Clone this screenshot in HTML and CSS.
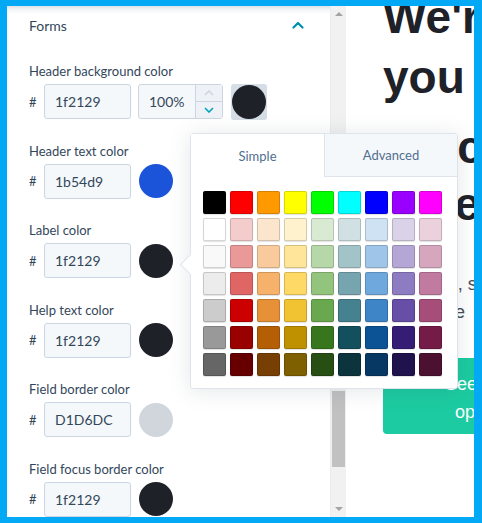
FILE: index.html
```html
<!DOCTYPE html>
<html lang="en">
	<head>
		<meta charset="UTF-8" />
		<meta name="viewport" content="width=device-width, initial-scale=1.0" />
		<title>Form styles</title>
		<link rel="stylesheet" href="styles.css">
	</head>
	<body>
		<div class="frame">
			<div class="panel">
				<div class="panel-head">
					<span>Forms</span>
					<svg class="collapse" width="12" height="8" viewBox="0 0 12 8">
						<polyline points="1.5,6.5 6,2 10.5,6.5" fill="none" stroke="#0091ae" stroke-width="2.2" stroke-linecap="round" stroke-linejoin="round" />
					</svg>
				</div>

				<div class="fields">
					<div class="field">
						<div class="label">Header background color</div>
						<div class="row">
							<span class="hash">#</span>
							<div class="hex">1f2129</div>
							<div class="pct">
								<span class="pct-val">100%</span>
								<div class="stepper">
									<span class="step">
										<svg width="10" height="6" viewBox="0 0 10 6"><polyline points="1,5 5,1 9,5" fill="none" stroke="#cbd6e2" stroke-width="1.6" /></svg>
									</span>
									<span class="step">
										<svg width="10" height="6" viewBox="0 0 10 6"><polyline points="1,1 5,5 9,1" fill="none" stroke="#00a4bd" stroke-width="1.6" /></svg>
									</span>
								</div>
							</div>
							<div class="swatch checker"><span class="dot dot-dark"></span></div>
						</div>
					</div>

					<div class="field">
						<div class="label">Header text color</div>
						<div class="row">
							<span class="hash">#</span>
							<div class="hex">1b54d9</div>
							<div class="swatch"><span class="dot dot-blue"></span></div>
						</div>
					</div>

					<div class="field">
						<div class="label">Label color</div>
						<div class="row">
							<span class="hash">#</span>
							<div class="hex">1f2129</div>
							<div class="swatch"><span class="dot dot-dark"></span></div>
						</div>
					</div>

					<div class="field">
						<div class="label">Help text color</div>
						<div class="row">
							<span class="hash">#</span>
							<div class="hex">1f2129</div>
							<div class="swatch"><span class="dot dot-dark"></span></div>
						</div>
					</div>

					<div class="field">
						<div class="label">Field border color</div>
						<div class="row">
							<span class="hash">#</span>
							<div class="hex">D1D6DC</div>
							<div class="swatch"><span class="dot dot-grey"></span></div>
						</div>
					</div>

					<div class="field">
						<div class="label">Field focus border color</div>
						<div class="row">
							<span class="hash">#</span>
							<div class="hex">1f2129</div>
							<div class="swatch"><span class="dot dot-dark"></span></div>
						</div>
					</div>
				</div>
			</div>

			<div class="scrollbar">
				<span class="sb-btn"><i class="arrow-up"></i></span>
				<div class="sb-track"><div class="sb-thumb"></div></div>
				<span class="sb-btn"><i class="arrow-down"></i></span>
			</div>

			<div class="preview">
				<div class="hero">
					<div>We're</div>
					<div>you</div>
				</div>
				<div class="hero hero-sub">
					<div>we co</div>
					<div>here</div>
				</div>
				<div class="intro">
					<div>Welcome, say hi</div>
					<div>Our whole</div>
				</div>
				<div class="cta">
					<div>See more</div>
					<div>options</div>
				</div>
			</div>

			<div class="picker">
				<div class="tabs">
					<div class="tab">Simple</div>
					<div class="tab tab-off">Advanced</div>
				</div>
				<div class="palette">
					<span class="chip" style="background:#000000"></span>
					<span class="chip" style="background:#ff0000"></span>
					<span class="chip" style="background:#ff9900"></span>
					<span class="chip" style="background:#ffff00"></span>
					<span class="chip" style="background:#00ff00"></span>
					<span class="chip" style="background:#00ffff"></span>
					<span class="chip" style="background:#0000ff"></span>
					<span class="chip" style="background:#9900ff"></span>
					<span class="chip" style="background:#ff00ff"></span>

					<span class="chip" style="background:#ffffff"></span>
					<span class="chip" style="background:#f4cccc"></span>
					<span class="chip" style="background:#fce5cd"></span>
					<span class="chip" style="background:#fff2cc"></span>
					<span class="chip" style="background:#d9ead3"></span>
					<span class="chip" style="background:#d0e0e3"></span>
					<span class="chip" style="background:#cfe2f3"></span>
					<span class="chip" style="background:#d9d2e9"></span>
					<span class="chip" style="background:#ead1dc"></span>

					<span class="chip" style="background:#f9f9f9"></span>
					<span class="chip" style="background:#ea9999"></span>
					<span class="chip" style="background:#f9cb9c"></span>
					<span class="chip" style="background:#ffe599"></span>
					<span class="chip" style="background:#b6d7a8"></span>
					<span class="chip" style="background:#a2c4c9"></span>
					<span class="chip" style="background:#9fc5e8"></span>
					<span class="chip" style="background:#b4a7d6"></span>
					<span class="chip" style="background:#d5a6bd"></span>

					<span class="chip" style="background:#ececec"></span>
					<span class="chip" style="background:#e06666"></span>
					<span class="chip" style="background:#f6b26b"></span>
					<span class="chip" style="background:#ffd966"></span>
					<span class="chip" style="background:#93c47d"></span>
					<span class="chip" style="background:#76a5af"></span>
					<span class="chip" style="background:#6fa8dc"></span>
					<span class="chip" style="background:#8e7cc3"></span>
					<span class="chip" style="background:#c27ba0"></span>

					<span class="chip" style="background:#cccccc"></span>
					<span class="chip" style="background:#cc0000"></span>
					<span class="chip" style="background:#e69138"></span>
					<span class="chip" style="background:#f1c232"></span>
					<span class="chip" style="background:#6aa84f"></span>
					<span class="chip" style="background:#45818e"></span>
					<span class="chip" style="background:#3d85c6"></span>
					<span class="chip" style="background:#674ea7"></span>
					<span class="chip" style="background:#a64d79"></span>

					<span class="chip" style="background:#999999"></span>
					<span class="chip" style="background:#990000"></span>
					<span class="chip" style="background:#b45f06"></span>
					<span class="chip" style="background:#bf9000"></span>
					<span class="chip" style="background:#38761d"></span>
					<span class="chip" style="background:#134f5c"></span>
					<span class="chip" style="background:#0b5394"></span>
					<span class="chip" style="background:#351c75"></span>
					<span class="chip" style="background:#741b47"></span>

					<span class="chip" style="background:#666666"></span>
					<span class="chip" style="background:#660000"></span>
					<span class="chip" style="background:#783f04"></span>
					<span class="chip" style="background:#7f6000"></span>
					<span class="chip" style="background:#274e13"></span>
					<span class="chip" style="background:#0c343d"></span>
					<span class="chip" style="background:#073763"></span>
					<span class="chip" style="background:#20124d"></span>
					<span class="chip" style="background:#4c1130"></span>
				</div>
			</div>
		</div>
	</body>
</html>
```

FILE: styles.css
```css
* {
	margin: 0;
	padding: 0;
	box-sizing: border-box;
}

body {
	background: #03a9f4;
	font-family: 'Lato', 'Liberation Sans', sans-serif;
	color: #33475b;
}

.frame {
	position: relative;
	display: flex;
	height: 511px;
	margin: 6px 8px 6px 7px;
	background: #fff;
	overflow: hidden;
}

/* left settings panel */
.panel {
	width: 323px;
	flex: none;
	padding: 0 26px 0 22px;
	background: linear-gradient(
		to bottom,
		#dde2e8 0,
		#f4f6f8 4px,
		#fff 8px
	);
}

.panel-head {
	display: flex;
	align-items: center;
	justify-content: space-between;
	height: 38px;
	font-size: 14px;
}

.fields {
	padding-top: 18px;
}

.field {
	margin-bottom: 22.5px;
}

.label {
	font-size: 13px;
	line-height: 18px;
	margin-bottom: 4px;
}

.row {
	display: flex;
	align-items: center;
	height: 35px;
}

.hash {
	width: 15px;
	font-size: 13px;
}

.hex {
	width: 87px;
	height: 35px;
	margin-right: 7px;
	padding-left: 10px;
	border: 1px solid #cbd6e2;
	border-radius: 3px;
	background: #f5f8fa;
	font-size: 14px;
	line-height: 33px;
}

.pct {
	display: flex;
	width: 85px;
	height: 35px;
	margin-right: 8px;
	border: 1px solid #cbd6e2;
	border-radius: 3px;
	background: #f5f8fa;
}

.pct-val {
	flex: 1;
	padding-left: 10px;
	font-size: 14px;
	line-height: 33px;
}

.stepper {
	width: 27px;
	display: flex;
	flex-direction: column;
	border-left: 1px solid #cbd6e2;
	background: #eef2f6;
}

.step {
	flex: 1;
	display: flex;
	align-items: center;
	justify-content: center;
}

.step + .step {
	border-top: 1px solid #cbd6e2;
}

.swatch {
	width: 36px;
	height: 36px;
	display: flex;
	align-items: center;
	justify-content: center;
	border-radius: 3px;
}

.checker {
	background: #d5dde6;
}

.dot {
	width: 34px;
	height: 34px;
	border-radius: 50%;
}

.dot-dark {
	background: #1f2129;
}

.dot-blue {
	background: #1b54d9;
}

.dot-grey {
	background: #d1d6dc;
}

/* fake scrollbar */
.scrollbar {
	width: 16px;
	flex: none;
	display: flex;
	flex-direction: column;
	background: #f1f1f1;
	border-left: 1px solid #e8ebef;
}

.sb-btn {
	height: 16px;
	display: flex;
	align-items: center;
	justify-content: center;
}

.arrow-up,
.arrow-down {
	width: 0;
	height: 0;
	border-left: 4px solid transparent;
	border-right: 4px solid transparent;
}

.arrow-up {
	border-bottom: 4px solid #a3a3a3;
}

.arrow-down {
	border-top: 4px solid #a3a3a3;
}

.sb-track {
	flex: 1;
	padding: 0 1px 0 1px;
}

.sb-thumb {
	margin-top: 369px;
	height: 76px;
	background: #c1c1c1;
}

/* page preview */
.preview {
	flex: 1;
	overflow: hidden;
	padding-left: 37px;
	white-space: nowrap;
	font-family: 'Liberation Sans', sans-serif;
}

.hero {
	margin-top: -19px;
	font-size: 46px;
	font-weight: bold;
	line-height: 60px;
	color: #1f2129;
}

.hero-sub {
	margin-top: 12px;
	line-height: 57px;
}

.intro {
	margin-top: 37px;
	font-size: 18px;
	line-height: 28px;
	color: #4a4d55;
}

.cta {
	margin-top: 32px;
	width: 202px;
	height: 76px;
	padding-top: 12px;
	border-radius: 4px;
	background: #1ccba1;
	color: #fff;
	font-size: 18px;
	line-height: 28px;
	text-align: center;
}

/* colour picker popover */
.picker {
	position: absolute;
	left: 183px;
	top: 127px;
	width: 268px;
	height: 256px;
	border: 1px solid #dfe3eb;
	border-radius: 3px;
	background: #fff;
	box-shadow: 0 2px 22px rgba(45, 62, 80, 0.13);
}

.picker::before {
	content: '';
	position: absolute;
	left: -8px;
	top: 123px;
	width: 14px;
	height: 14px;
	background: #fff;
	border-left: 1px solid #dfe3eb;
	border-bottom: 1px solid #dfe3eb;
	transform: rotate(45deg);
}

.tabs {
	position: relative;
	display: grid;
	grid-template-columns: 1fr 1fr;
	height: 43px;
}

.tab {
	display: flex;
	align-items: center;
	justify-content: center;
	font-size: 13px;
	color: #516f90;
	background: #fff;
}

.tab-off {
	background: #f5f8fa;
	border-left: 1px solid #dfe3eb;
	border-bottom: 1px solid #dfe3eb;
}

.palette {
	display: grid;
	grid-template-columns: repeat(9, 23px);
	grid-auto-rows: 23px;
	gap: 4px;
	padding: 14px 0 0 12px;
}

.chip {
	border: 1px solid rgba(0, 0, 0, 0.16);
	border-radius: 2px;
	box-shadow: 0 1px 1px rgba(0, 0, 0, 0.12);
}
```
